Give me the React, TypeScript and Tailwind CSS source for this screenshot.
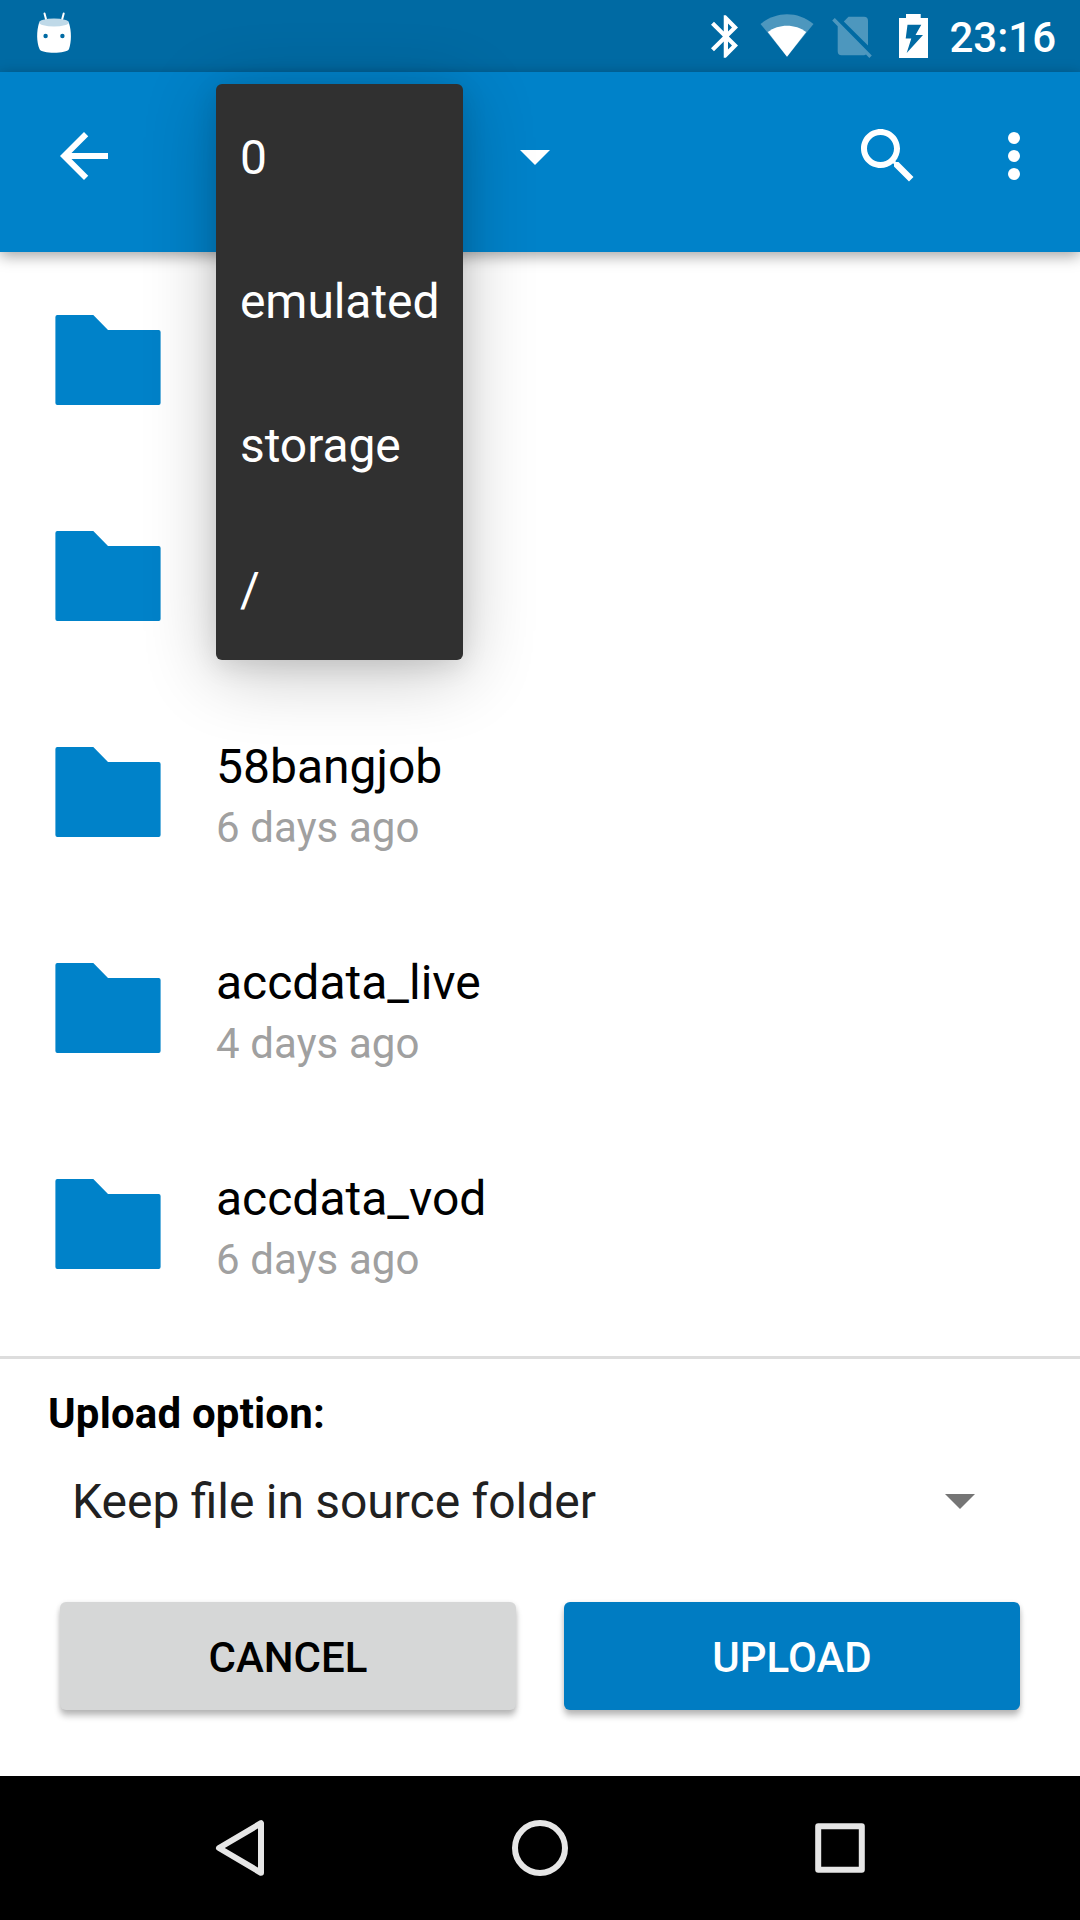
import type { ReactNode } from "react";

const files = [
  { name: "", date: "" },
  { name: "", date: "" },
  { name: "58bangjob", date: "6 days ago" },
  { name: "accdata_live", date: "4 days ago" },
  { name: "accdata_vod", date: "6 days ago" },
];

const paths = ["0", "emulated", "storage", "/"];

function StatusBar() {
  return (
    <div className="flex h-[72px] items-start bg-[#006aa3] text-white">
      <svg className="ml-9 mt-3 h-[42px] w-9" viewBox="36 12 36 42">
        <path d="M44.5 13.5 L46.5 21 M63.7 13.5 L61.7 21" stroke="#fff" strokeWidth="2" strokeLinecap="round" />
        <path d="M39 23 C36.5 31 36.5 42 39.5 49 C41 54 67 54 69 49 C71.6 42 71.6 31 69 23 Z" fill="#fff" />
        <ellipse cx="54" cy="22.5" rx="15" ry="4" fill="#bfd9e8" />
        <circle cx="45.6" cy="36" r="2.2" fill="#006aa3" />
        <circle cx="62.4" cy="36" r="2.2" fill="#006aa3" />
      </svg>
      <div className="ml-auto flex items-start">
        <svg className="mt-[15px] h-[43px] w-[27px]" viewBox="5 2 12.71 20" fill="#fff">
          <path d="M17.71 7.71L12 2h-1v7.59L6.41 5 5 6.41 10.59 12 5 17.59 6.41 19 11 14.41V22h1l5.71-5.71-4.3-4.29 4.3-4.29zM13 5.83l1.88 1.88L13 9.59V5.83zm1.88 10.46L13 18.17v-3.76l1.88 1.88z" />
        </svg>
        <svg className="ml-[22px] mt-3.5 h-11 w-[54px]" viewBox="760.5 14 54 44">
          <path d="M787.5 56.7 L761 24 C777 11 798 11 814 24 Z" fill="#fff" fillOpacity=".3" />
          <path d="M787.5 56.7 L768.3 32 C779 23.5 796 23.5 806.7 32 Z" fill="#fff" />
        </svg>
        <svg className="ml-[18px] mt-4 h-[43px] w-10" viewBox="832 16 40 43" fill="#fff" fillOpacity=".3">
          <path d="M848.5 16.7 H864 Q868 16.7 868 20.7 V45.5 L843.8 21.4 Z" />
          <path d="M832.2 20.6 L834.8 18 L871.8 55.5 L869.3 58 L866 54.6 Q865 55.2 864 55.2 H841.5 Q837.7 55.2 837.7 51.2 V26.2 Z" />
        </svg>
        <svg className="ml-[27px] mt-3.5 h-11 w-[29px]" viewBox="899 14 29 44">
          <path fillRule="evenodd" fill="#fff" d="M906 14 H920.7 V18 H928 V58 H899 V18 H906 Z M907.5 24.7 L905.7 38.5 H911.3 L906.7 53 L923 35 H915.5 L921.3 24.7 Z" />
        </svg>
        <span className="ml-[21px] mr-6 mt-[13px] text-[42px] font-medium leading-[49px]">23:16</span>
      </div>
    </div>
  );
}

function PathMenu() {
  return (
    <ul className="absolute left-[216px] top-3 z-20 w-[247px] rounded-md bg-[#303030] text-white shadow-[0_12px_72px_rgba(0,0,0,0.24),0_6px_26px_rgba(0,0,0,0.10)]">
      {paths.map((p) => (
        <li key={p} className="flex h-36 items-center px-6 pt-1 text-5xl leading-[56px] tracking-[-0.08px]">
          {p}
        </li>
      ))}
    </ul>
  );
}

function AppBar() {
  return (
    <header className="relative z-10 flex h-[180px] bg-[#0082c9] text-white shadow-[0_4px_14px_rgba(0,0,0,0.36)]">
      <svg className="ml-12 mt-12 size-[72px]" viewBox="0 0 24 24" fill="currentColor">
        <path d="M20 11H7.83l5.59-5.59L12 4l-8 8 8 8 1.41-1.41L7.83 13H20v-2z" />
      </svg>
      <svg className="ml-[400px] mt-[78px] h-[15px] w-[30px]" viewBox="0 0 30 15" fill="currentColor">
        <path d="M0 0H30L15 15Z" />
      </svg>
      <svg className="ml-auto mt-12 size-[72px]" viewBox="0 0 24 24" fill="currentColor">
        <path d="M15.5 14h-.79l-.28-.27C15.41 12.59 16 11.11 16 9.5 16 5.91 13.09 3 9.5 3S3 5.91 3 9.5 5.91 16 9.5 16c1.61 0 3.09-.59 4.23-1.57l.27.28v.79l5 4.99L20.49 19l-4.99-5zm-6 0C7.01 14 5 11.99 5 9.5S7.01 5 9.5 5 14 7.01 14 9.5 11.99 14 9.5 14z" />
      </svg>
      <svg className="ml-[54px] mr-[30px] mt-12 size-[72px]" viewBox="0 0 24 24" fill="currentColor">
        <circle cx="12" cy="6" r="2" />
        <circle cx="12" cy="12" r="2" />
        <circle cx="12" cy="18" r="2" />
      </svg>
      <PathMenu />
    </header>
  );
}

function FileRow({ name, date }: { name: string; date: string }) {
  return (
    <li className="flex h-[216px]">
      <svg className="ml-[55px] mt-[63px] h-[90px] w-[106px]" viewBox="0 0 106 90" fill="#0082c9">
        <path d="M2.4 0H38.3L53 15H103.6Q105.6 15 105.6 17V88Q105.6 90 103.6 90H2.4Q.4 90 .4 88V2Q.4 0 2.4 0Z" />
      </svg>
      <div className="ml-[55px] pt-[55px]">
        <p className="text-5xl leading-[56px] text-black">{name}</p>
        <p className="mt-2 text-[42px] leading-[49px] tracking-[0.1px] text-[#a0a0a0]">{date}</p>
      </div>
    </li>
  );
}

function Button({ className, children }: { className: string; children: ReactNode }) {
  return (
    <button
      className={
        "h-[108px] flex-1 rounded-md pt-0.5 text-[42px] font-medium leading-[49px] shadow-[0_6px_6px_rgba(0,0,0,0.24),0_1px_5px_rgba(0,0,0,0.10)] " +
        className
      }
    >
      {children}
    </button>
  );
}

function UploadPanel() {
  return (
    <section className="h-[420px] border-t-[3px] border-[#dddddd] bg-white">
      <h2 className="ml-12 mt-[30px] text-[42px] font-bold leading-[49px] tracking-[0.18px] text-black">Upload option:</h2>
      <div className="ml-[72px] mr-[105px] mt-9 flex items-center justify-between text-5xl leading-[56px] text-[#212121]">
        <span className="[word-spacing:-0.6px]">Keep file in source folder</span>
        <svg className="mb-0.5 h-[15px] w-[30px]" viewBox="0 0 30 15" fill="#757575">
          <path d="M0 0H30L15 15Z" />
        </svg>
      </div>
      <div className="mx-[60px] mt-[72px] flex gap-12">
        <Button className="bg-[#d6d7d7] text-black">CANCEL</Button>
        <Button className="bg-[#007cc2] text-white">UPLOAD</Button>
      </div>
    </section>
  );
}

function NavBar() {
  return (
    <nav className="flex h-36 items-center justify-center gap-[240px] bg-black">
      <svg className="size-[60px]" viewBox="0 0 60 60" fill="none" stroke="#e6e6e6" strokeWidth="6" strokeLinejoin="round">
        <path d="M51 5.2V54.8L9 30Z" />
      </svg>
      <svg className="size-[60px]" viewBox="0 0 60 60" fill="none" stroke="#e6e6e6" strokeWidth="6">
        <circle cx="30" cy="30" r="25" />
      </svg>
      <svg className="size-[60px]" viewBox="0 0 60 60" fill="none" stroke="#e6e6e6" strokeWidth="6" strokeLinejoin="round">
        <path d="M8.2 8.2H51.8V51.8H8.2Z" />
      </svg>
    </nav>
  );
}

export default function App() {
  return (
    <main className="flex h-[1920px] w-[1080px] flex-col overflow-hidden bg-white font-[Roboto,sans-serif]">
      <StatusBar />
      <AppBar />
      <ul className="flex-1">
        {files.map((f, i) => (
          <FileRow key={i} name={f.name} date={f.date} />
        ))}
      </ul>
      <UploadPanel />
      <NavBar />
    </main>
  );
}
